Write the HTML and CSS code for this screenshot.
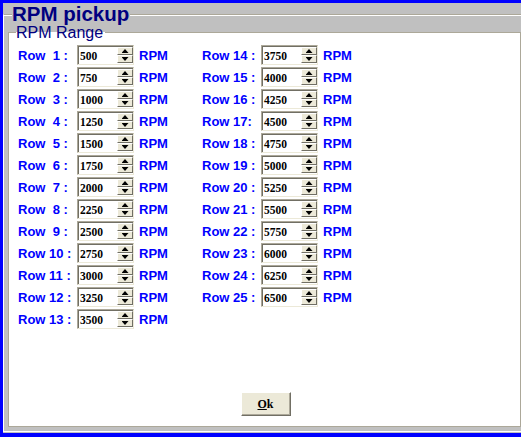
FILE: index.html
```html
<!DOCTYPE html>
<html>
<head>
<meta charset="utf-8">
<link rel="stylesheet" href="styles.css">
</head>
<body>
<div class="win">
  <fieldset class="outer">
    <legend class="title">RPM pickup</legend>
    <fieldset class="inner">
      <legend class="sub">RPM Range</legend>
      <div class="cols">
        <div class="col">
          <div class="row"><span class="lbl">Row  1 :</span><div class="spin"><span class="val">500</span><span class="btns"><span class="btn"><i class="up"></i></span><span class="btn"><i class="dn"></i></span></span></div><span class="rpm">RPM</span></div>
          <div class="row"><span class="lbl">Row  2 :</span><div class="spin"><span class="val">750</span><span class="btns"><span class="btn"><i class="up"></i></span><span class="btn"><i class="dn"></i></span></span></div><span class="rpm">RPM</span></div>
          <div class="row"><span class="lbl">Row  3 :</span><div class="spin"><span class="val">1000</span><span class="btns"><span class="btn"><i class="up"></i></span><span class="btn"><i class="dn"></i></span></span></div><span class="rpm">RPM</span></div>
          <div class="row"><span class="lbl">Row  4 :</span><div class="spin"><span class="val">1250</span><span class="btns"><span class="btn"><i class="up"></i></span><span class="btn"><i class="dn"></i></span></span></div><span class="rpm">RPM</span></div>
          <div class="row"><span class="lbl">Row  5 :</span><div class="spin"><span class="val">1500</span><span class="btns"><span class="btn"><i class="up"></i></span><span class="btn"><i class="dn"></i></span></span></div><span class="rpm">RPM</span></div>
          <div class="row"><span class="lbl">Row  6 :</span><div class="spin"><span class="val">1750</span><span class="btns"><span class="btn"><i class="up"></i></span><span class="btn"><i class="dn"></i></span></span></div><span class="rpm">RPM</span></div>
          <div class="row"><span class="lbl">Row  7 :</span><div class="spin"><span class="val">2000</span><span class="btns"><span class="btn"><i class="up"></i></span><span class="btn"><i class="dn"></i></span></span></div><span class="rpm">RPM</span></div>
          <div class="row"><span class="lbl">Row  8 :</span><div class="spin"><span class="val">2250</span><span class="btns"><span class="btn"><i class="up"></i></span><span class="btn"><i class="dn"></i></span></span></div><span class="rpm">RPM</span></div>
          <div class="row"><span class="lbl">Row  9 :</span><div class="spin"><span class="val">2500</span><span class="btns"><span class="btn"><i class="up"></i></span><span class="btn"><i class="dn"></i></span></span></div><span class="rpm">RPM</span></div>
          <div class="row"><span class="lbl">Row 10 :</span><div class="spin"><span class="val">2750</span><span class="btns"><span class="btn"><i class="up"></i></span><span class="btn"><i class="dn"></i></span></span></div><span class="rpm">RPM</span></div>
          <div class="row"><span class="lbl">Row 11 :</span><div class="spin"><span class="val">3000</span><span class="btns"><span class="btn"><i class="up"></i></span><span class="btn"><i class="dn"></i></span></span></div><span class="rpm">RPM</span></div>
          <div class="row"><span class="lbl">Row 12 :</span><div class="spin"><span class="val">3250</span><span class="btns"><span class="btn"><i class="up"></i></span><span class="btn"><i class="dn"></i></span></span></div><span class="rpm">RPM</span></div>
          <div class="row"><span class="lbl">Row 13 :</span><div class="spin"><span class="val">3500</span><span class="btns"><span class="btn"><i class="up"></i></span><span class="btn"><i class="dn"></i></span></span></div><span class="rpm">RPM</span></div>
        </div>
        <div class="col">
          <div class="row"><span class="lbl">Row 14 :</span><div class="spin"><span class="val">3750</span><span class="btns"><span class="btn"><i class="up"></i></span><span class="btn"><i class="dn"></i></span></span></div><span class="rpm">RPM</span></div>
          <div class="row"><span class="lbl">Row 15 :</span><div class="spin"><span class="val">4000</span><span class="btns"><span class="btn"><i class="up"></i></span><span class="btn"><i class="dn"></i></span></span></div><span class="rpm">RPM</span></div>
          <div class="row"><span class="lbl">Row 16 :</span><div class="spin"><span class="val">4250</span><span class="btns"><span class="btn"><i class="up"></i></span><span class="btn"><i class="dn"></i></span></span></div><span class="rpm">RPM</span></div>
          <div class="row"><span class="lbl">Row 17:</span><div class="spin"><span class="val">4500</span><span class="btns"><span class="btn"><i class="up"></i></span><span class="btn"><i class="dn"></i></span></span></div><span class="rpm">RPM</span></div>
          <div class="row"><span class="lbl">Row 18 :</span><div class="spin"><span class="val">4750</span><span class="btns"><span class="btn"><i class="up"></i></span><span class="btn"><i class="dn"></i></span></span></div><span class="rpm">RPM</span></div>
          <div class="row"><span class="lbl">Row 19 :</span><div class="spin"><span class="val">5000</span><span class="btns"><span class="btn"><i class="up"></i></span><span class="btn"><i class="dn"></i></span></span></div><span class="rpm">RPM</span></div>
          <div class="row"><span class="lbl">Row 20 :</span><div class="spin"><span class="val">5250</span><span class="btns"><span class="btn"><i class="up"></i></span><span class="btn"><i class="dn"></i></span></span></div><span class="rpm">RPM</span></div>
          <div class="row"><span class="lbl">Row 21 :</span><div class="spin"><span class="val">5500</span><span class="btns"><span class="btn"><i class="up"></i></span><span class="btn"><i class="dn"></i></span></span></div><span class="rpm">RPM</span></div>
          <div class="row"><span class="lbl">Row 22 :</span><div class="spin"><span class="val">5750</span><span class="btns"><span class="btn"><i class="up"></i></span><span class="btn"><i class="dn"></i></span></span></div><span class="rpm">RPM</span></div>
          <div class="row"><span class="lbl">Row 23 :</span><div class="spin"><span class="val">6000</span><span class="btns"><span class="btn"><i class="up"></i></span><span class="btn"><i class="dn"></i></span></span></div><span class="rpm">RPM</span></div>
          <div class="row"><span class="lbl">Row 24 :</span><div class="spin"><span class="val">6250</span><span class="btns"><span class="btn"><i class="up"></i></span><span class="btn"><i class="dn"></i></span></span></div><span class="rpm">RPM</span></div>
          <div class="row"><span class="lbl">Row 25 :</span><div class="spin"><span class="val">6500</span><span class="btns"><span class="btn"><i class="up"></i></span><span class="btn"><i class="dn"></i></span></span></div><span class="rpm">RPM</span></div>
        </div>
      </div>
      <div class="actions"><button class="ok"><u>O</u>k</button></div>
    </fieldset>
  </fieldset>
</div>
</body>
</html>
```
FILE: styles.css
```css
html, body {
  margin: 0;
  padding: 0;
}
body {
  width: 521px;
  height: 437px;
  overflow: hidden;
  background: #c0c0c0;
  font-family: "Liberation Sans", Arial, sans-serif;
}
.win {
  box-sizing: border-box;
  width: 521px;
  height: 437px;
  border-top: 3px solid #0000ff;
  border-left: 3px solid #0000ff;
  border-bottom: 4px solid #0000ff;
  background: #c0c0c0;
  overflow: hidden;
  display: flex;
  flex-direction: column;
}
.outer {
  box-sizing: border-box;
  margin: 0 0 1px 0;
  padding: 0 0 4px 4px;
  border: 1px solid #fff;
  border-top-color: #aca899;
  border-right: none;
  box-shadow: inset 0 1px 0 #fff;
  flex: 1;
  min-height: 0;
  min-width: 0;
  display: flex;
  flex-direction: column;
}
.title {
  margin-left: 4px;
  padding: 0 1px 2px 0;
  font: bold 20.5px/21px "Liberation Sans", Arial, sans-serif;
  color: #000080;
  background: #c0c0c0;
}
.inner {
  box-sizing: border-box;
  margin: 0;
  padding: 0;
  border: 1px solid #aca899;
  background: #fff;
  flex: 1;
  min-height: 0;
  min-width: 0;
  display: flex;
  flex-direction: column;
}
.sub {
  margin-left: 7px;
  padding: 0 2px 0 0;
  font: 16px/13px "Liberation Sans", Arial, sans-serif;
  color: #000080;
}
.cols {
  display: flex;
  padding: 6px 0 0 9px;
}
.col {
  width: 184px;
  display: flex;
  flex-direction: column;
  gap: 2px;
}
.row {
  display: flex;
  align-items: center;
  height: 20px;
}
.lbl {
  width: 59px;
  white-space: pre;
  font: bold 13px/20px "Liberation Sans", Arial, sans-serif;
  color: #0000ff;
  padding-top: 1px;
  box-sizing: border-box;
  height: 20px;
}
.rpm {
  margin-left: 5px;
  font: bold 13px/20px "Liberation Sans", Arial, sans-serif;
  color: #0000ff;
  padding-top: 1px;
  height: 20px;
  box-sizing: border-box;
}
.spin {
  box-sizing: border-box;
  width: 57px;
  height: 20px;
  border: 1px solid;
  border-color: #aca899 #ece9d8 #ece9d8 #aca899;
  box-shadow: inset 1px 1px 0 #716f64;
  background: #fff;
  display: flex;
  align-items: center;
  padding-left: 2px;
}
.val {
  flex: 1;
  font: bold 11.5px/16px "Liberation Serif", "Times New Roman", serif;
  color: #000;
  padding-top: 1px;
}
.btns {
  width: 16px;
  height: 16px;
  display: flex;
  flex-direction: column;
}
.btn {
  box-sizing: border-box;
  flex: 1;
  background: #ece9d8;
  border: 1px solid;
  border-color: #fff #716f64 #716f64 #fff;
  display: flex;
  align-items: center;
  justify-content: center;
}
.up, .dn {
  display: block;
  width: 7px;
  height: 4px;
  background: #000;
}
.up {
  clip-path: polygon(50% 0, 100% 100%, 0 100%);
}
.dn {
  clip-path: polygon(0 0, 100% 0, 50% 100%);
}
.actions {
  margin-top: auto;
  display: flex;
  justify-content: center;
  padding: 0 0 10px 2px;
}
.ok {
  box-sizing: border-box;
  width: 50px;
  height: 24px;
  padding: 0;
  background: #ece9d8;
  border: 1px solid;
  border-color: #fff #716f64 #716f64 #fff;
  box-shadow: inset -1px -1px 0 #aca899;
  font: bold 12px/20px "Liberation Serif", "Times New Roman", serif;
  color: #000;
}
.ok u {
  text-decoration: underline;
}
```
